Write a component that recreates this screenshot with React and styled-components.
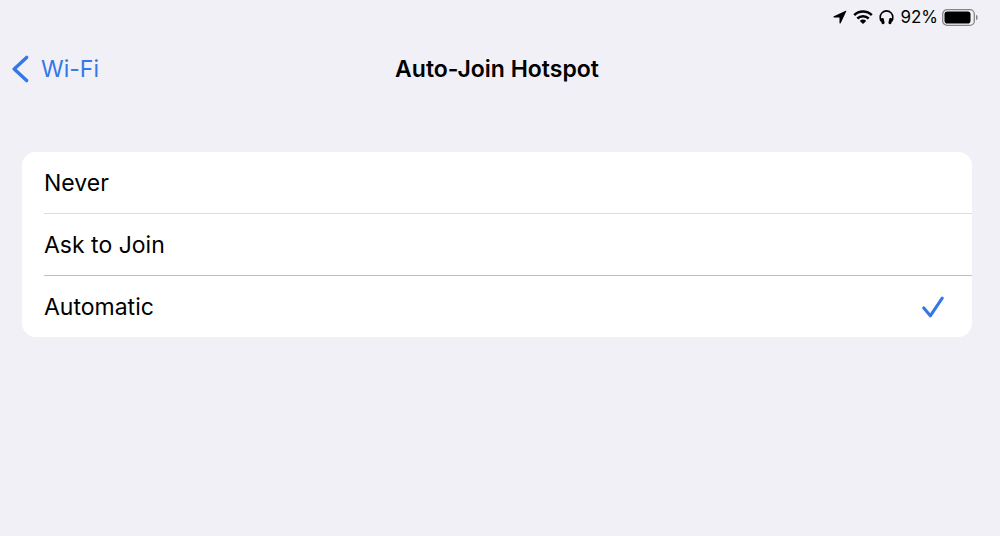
import { useState } from "react";
import styled, { createGlobalStyle } from "styled-components";

const options = ["Never", "Ask to Join", "Automatic"];

const LocationIcon = () => (
  <svg width="14" height="14" viewBox="0 0 14 14" aria-hidden="true">
    <path
      d="M12.7.7.9 6.2c-.7.3-.5 1.3.2 1.3h5.1c.2 0 .3.1.3.3v5.1c0 .7 1 .9 1.3.2l5.5-11.8c.2-.4-.2-.8-.6-.6Z"
      fill="#000"
    />
  </svg>
);

const WifiIcon = () => (
  <svg width="20" height="16" viewBox="0 0 20 16" aria-hidden="true">
    <g fill="none" stroke="#000" strokeWidth="2.5">
      <path d="M1.2 6.1a12.6 12.6 0 0 1 17.6 0" />
      <path d="M4.3 9.5a8.2 8.2 0 0 1 11.4 0" />
    </g>
    <path d="M10 15 6.8 11.9a4.6 4.6 0 0 1 6.4 0Z" fill="#000" />
  </svg>
);

const HeadphonesIcon = () => (
  <svg width="15" height="16" viewBox="0 0 15 16" aria-hidden="true">
    <path
      d="M2.6 12.6A6 6 0 0 1 1.2 8.2a6.3 6.3 0 0 1 12.6 0 6 6 0 0 1-1.4 4.4"
      fill="none"
      stroke="#000"
      strokeWidth="1.6"
    />
    <rect x="2.2" y="9" width="3" height="6.2" rx="1.3" transform="rotate(-12 3.7 12)" />
    <rect x="9.8" y="9" width="3" height="6.2" rx="1.3" transform="rotate(12 11.3 12)" />
  </svg>
);

const BatteryIcon = () => (
  <svg width="36" height="17" viewBox="0 0 36 17" aria-hidden="true">
    <rect
      x="0.7"
      y="0.7"
      width="31.6"
      height="15.6"
      rx="4.4"
      fill="none"
      stroke="#85858a"
      strokeWidth="1.3"
    />
    <rect x="2.5" y="2.5" width="26" height="12" rx="2.8" />
    <path d="M34 5.8c2.2.8 2.2 4.6 0 5.4Z" fill="#85858a" />
  </svg>
);

const ChevronIcon = () => (
  <svg width="17" height="28" viewBox="0 0 17 28" aria-hidden="true">
    <path
      d="M14.6 2.4 2.2 14l12.4 11.6"
      fill="none"
      stroke="#3478e8"
      strokeWidth="3.4"
      strokeLinecap="round"
      strokeLinejoin="round"
    />
  </svg>
);

const CheckIcon = () => (
  <svg width="22" height="22" viewBox="0 0 22 22" aria-hidden="true">
    <path
      d="M1.8 12 8.3 19.8 20.2 2.2"
      fill="none"
      stroke="#3478e8"
      strokeWidth="3.1"
      strokeLinecap="round"
      strokeLinejoin="round"
    />
  </svg>
);

const App = () => {
  const [selected, setSelected] = useState("Automatic");

  return (
    <>
      <GlobalStyle />
      <StatusBar>
        <LocationIcon />
        <WifiIcon />
        <HeadphonesIcon />
        <Battery>
          <span>92%</span>
          <BatteryIcon />
        </Battery>
      </StatusBar>
      <NavBar>
        <BackLink href="#wifi">
          <ChevronIcon />
          Wi-Fi
        </BackLink>
        <Title>Auto-Join Hotspot</Title>
      </NavBar>
      <main>
        <OptionList role="radiogroup" aria-label="Auto-Join Hotspot">
          {options.map((option) => (
            <Option key={option}>
              <input
                type="radio"
                name="auto-join"
                value={option}
                checked={selected === option}
                onChange={() => setSelected(option)}
              />
              <span>{option}</span>
              {selected === option && <CheckIcon />}
            </Option>
          ))}
        </OptionList>
      </main>
    </>
  );
};

export default App;

const GlobalStyle = createGlobalStyle`
  * {
    box-sizing: border-box;
  }

  body {
    margin: 0;
    background: #f1f0f7;
    color: #000;
    font-family: Inter, "Liberation Sans", sans-serif;
  }

  svg {
    display: block;
    flex-shrink: 0;
  }
`;

const StatusBar = styled.div`
  display: flex;
  align-items: center;
  justify-content: flex-end;
  gap: 6px;
  height: 34px;
  padding-right: 22px;
`;

const Battery = styled.div`
  display: flex;
  align-items: center;
  gap: 4px;
  font-size: 17px;
  line-height: 20px;
`;

const NavBar = styled.header`
  display: grid;
  grid-template-columns: 1fr auto 1fr;
  align-items: center;
  height: 70px;
  padding: 0 18px 0 12px;
`;

const BackLink = styled.a`
  display: flex;
  align-items: center;
  justify-self: start;
  gap: 12px;
  color: #3478e8;
  font-size: 23px;
  line-height: 28px;
  text-decoration: none;
`;

const Title = styled.h1`
  margin: 0;
  font-size: 23px;
  font-weight: 600;
  line-height: 28px;
`;

const OptionList = styled.div`
  margin: 48px 28px 0 22px;
  padding-left: 22px;
  border-radius: 14px;
  background: #fff;
`;

const Option = styled.label`
  display: flex;
  align-items: center;
  justify-content: space-between;
  padding: 17px 28px 16px 0;
  font-size: 23px;
  line-height: 28px;
  cursor: pointer;

  & + & {
    border-top: 1px solid #dddddf;
  }

  & + & + & {
    border-top-color: #bebec0;
  }

  input {
    appearance: none;
    width: 0;
    height: 0;
    margin: 0;
  }

  input:focus-visible + span {
    text-decoration: underline;
  }

  span {
    flex: 1;
  }
`;
